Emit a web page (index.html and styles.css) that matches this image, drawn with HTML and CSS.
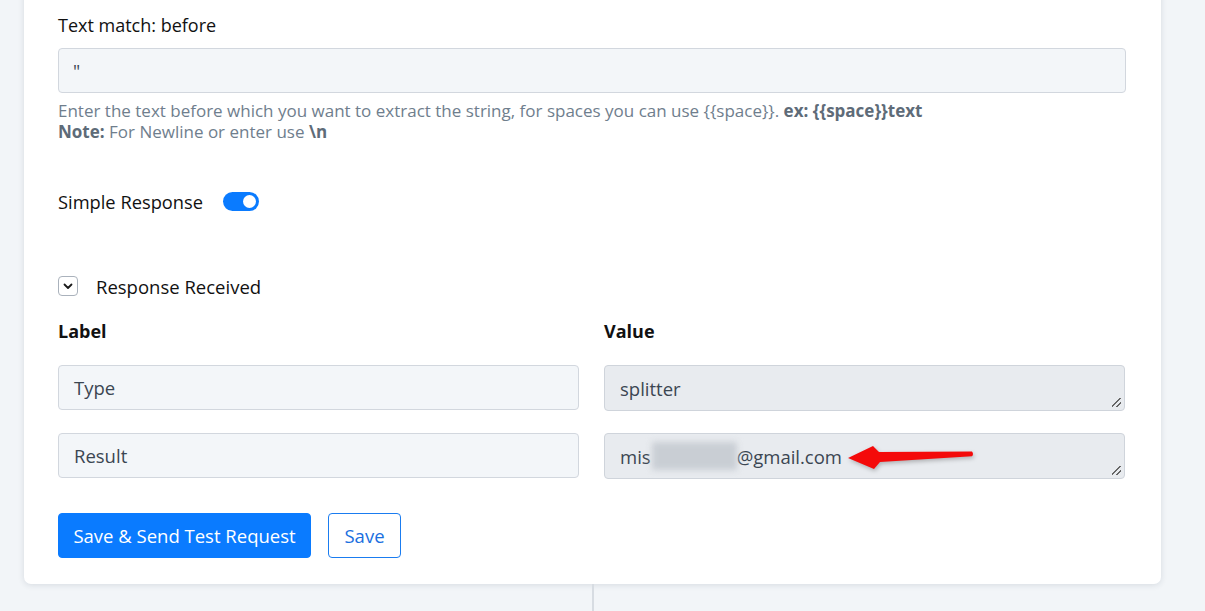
FILE: index.html
```html
<!DOCTYPE html>
<html lang="en">
<head>
<meta charset="utf-8">
<title>Text Splitter – Response</title>
<link rel="stylesheet" href="styles.css">
</head>
<body>
<div class="canvas">
  <div class="card">
    <div class="field">
      <label class="field-label">Text match: before</label>
      <div class="input">"</div>
      <p class="help">Enter the text before which you want to extract the string, for spaces you can use {{space}}. <b>ex: {{space}}text</b><br><b>Note:</b> For Newline or enter use <b>\n</b></p>
    </div>

    <div class="toggle-row">
      <span class="toggle-label">Simple Response</span>
      <span class="switch"><span class="knob"></span></span>
    </div>

    <div class="collapse-row">
      <span class="chev">
        <svg width="10" height="7" viewBox="0 0 10 7"><path d="M1.5 1.5 L5 5 L8.5 1.5" fill="none" stroke="#1a1a1a" stroke-width="1.8" stroke-linecap="round" stroke-linejoin="round"/></svg>
      </span>
      <span class="collapse-title">Response Received</span>
    </div>

    <div class="grid">
      <div class="col-head">Label</div>
      <div class="col-head">Value</div>
      <div class="input cell">Type</div>
      <div class="area">splitter<span class="grip"></span></div>
      <div class="input cell">Result</div>
      <div class="area"><span>mis</span><span class="masked" aria-hidden="true"></span><span>@gmail.com</span><span class="grip"></span>
        <svg class="pointer" width="130" height="28" viewBox="0 0 130 28"><path d="M2 14 L27 2 L33 8 L126 7.6 Q128 10 126 12.2 L34 18 L28 25 Z" fill="#f40a0a"/></svg>
      </div>
    </div>

    <div class="actions">
      <button class="btn primary">Save &amp; Send Test Request</button>
      <button class="btn outline">Save</button>
    </div>
  </div>
  <div class="connector"></div>
</div>
</body>
</html>
```

FILE: styles.css
```css
* { box-sizing: border-box; }

html, body {
  margin: 0;
  height: 100%;
  background: #f2f5f8;
  overflow: hidden;
}

body {
  font-family: "Open Sans", "Noto Sans", sans-serif;
  color: #111;
}

.canvas {
  display: flex;
  flex-direction: column;
  align-items: flex-start;
  padding-left: 24px;
  margin-top: -15px;
}

.card {
  width: 1137px;
  background: #fff;
  border-radius: 0 0 7px 7px;
  box-shadow: 0 1px 6px rgba(30, 45, 70, 0.13);
  padding: 28px 35px 26px 34px;
}

.field-label {
  display: block;
  font-size: 18px;
  line-height: 24px;
  color: #111;
  margin-bottom: 11px;
}

.input {
  height: 45px;
  background: #f3f6f9;
  border: 1px solid #d2d7de;
  border-radius: 4px;
  padding: 0 14px;
  display: flex;
  align-items: center;
  font-size: 18px;
  color: #3b4652;
}

.help {
  margin: 7px 0 0;
  font-size: 17px;
  line-height: 21px;
  color: #6f7e8d;
}
.help b { color: #5e6b78; font-weight: 700; }

.toggle-row {
  display: flex;
  align-items: center;
  gap: 20px;
  margin-top: 47px;
  height: 24px;
}
.toggle-label { font-size: 18.3px; }

.switch {
  width: 36px;
  height: 19px;
  border-radius: 10px;
  background: #0a7bff;
  position: relative;
  display: inline-block;
}
.knob {
  position: absolute;
  right: 3px;
  top: 3px;
  width: 13px;
  height: 13px;
  border-radius: 50%;
  background: #fff;
}

.collapse-row {
  display: flex;
  align-items: center;
  gap: 18px;
  margin-top: 61px;
  height: 24px;
}
.chev {
  width: 20px;
  height: 20px;
  border: 1px solid #aab2bc;
  border-radius: 4px;
  display: flex;
  align-items: center;
  justify-content: center;
}
.collapse-title { font-size: 18.5px; }

.grid {
  display: grid;
  grid-template-columns: 521px 521px;
  column-gap: 25px;
  row-gap: 22px;
  margin-top: 20px;
}
.col-head {
  font-size: 18px;
  font-weight: 700;
  line-height: 24px;
  margin-top: 1px;
}
.cell { font-size: 18.5px; padding-left: 15px; }

.area {
  position: relative;
  height: 46px;
  background: #e8ebef;
  border: 1px solid #cfd4db;
  border-radius: 4px;
  padding: 0 15px;
  display: flex;
  align-items: center;
  font-size: 18.5px;
  color: #3b4652;
}
/* obscured part of the address */
.masked {
  display: inline-block;
  width: 85px;
  height: 28px;
  margin-left: 1px;
  background: #c9ced4;
  filter: blur(3px);
}
.grip {
  position: absolute;
  right: 3px;
  bottom: 3px;
  width: 9px;
  height: 9px;
  background:
    linear-gradient(135deg, transparent 44%, #666 44%, #666 54%, transparent 54%, transparent 70%, #666 70%, #666 80%, transparent 80%);
}
.pointer {
  position: absolute;
  left: 241px;
  top: 10px;
  filter: drop-shadow(1px 2px 2px rgba(0,0,0,0.25));
}

.actions {
  display: flex;
  gap: 17px;
  margin-top: 34px;
}
.btn {
  height: 45px;
  border-radius: 4px;
  font-family: inherit;
  font-size: 18.5px;
  padding: 0 10px;
  cursor: pointer;
}
.primary {
  background: #0a7bff;
  border: 1px solid #0a7bff;
  color: #fff;
  width: 253px;
}
.outline {
  background: #fff;
  border: 1px solid #1a7cf0;
  color: #1a6fe0;
  width: 73px;
}

.connector {
  width: 2px;
  height: 40px;
  background: #d7dce2;
  margin-left: 568px;
}
```
